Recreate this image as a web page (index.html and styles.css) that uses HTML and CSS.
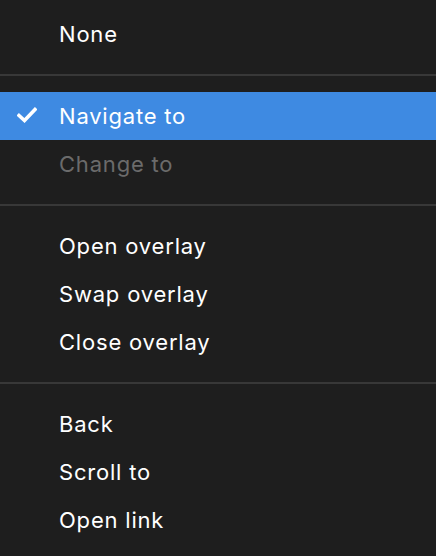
FILE: index.html
```html
<!DOCTYPE html>
<html>
<head>
<meta charset="utf-8">
<link rel="stylesheet" href="styles.css">
</head>
<body>
<div class="menu">
  <div class="item">None</div>
  <div class="sep"></div>
  <div class="item selected">
    <svg class="check" width="20" height="16" viewBox="0 0 20 16"><path d="M2 8.5 L7.5 13.5 L18 2.5" fill="none" stroke="#ffffff" stroke-width="3.6" stroke-linecap="square" stroke-linejoin="miter"/></svg>
    Navigate to
  </div>
  <div class="item disabled">Change to</div>
  <div class="sep"></div>
  <div class="item">Open overlay</div>
  <div class="item">Swap overlay</div>
  <div class="item">Close overlay</div>
  <div class="sep"></div>
  <div class="item">Back</div>
  <div class="item">Scroll to</div>
  <div class="item">Open link</div>
</div>
</body>
</html>
```
FILE: styles.css
```css
html, body {
  margin: 0;
  padding: 0;
  background: #1e1e1e;
}
.menu {
  padding-top: 10px;
  font-family: Inter, "Noto Sans", sans-serif;
  font-size: 22px;
  font-weight: 400;
  letter-spacing: 0.8px;
  color: #ffffff;
  display: flex;
  flex-direction: column;
}
.item {
  position: relative;
  height: 48px;
  display: flex;
  align-items: center;
  padding-left: 59px;
  white-space: nowrap;
}
.selected {
  background: #3e8ae2;
}
.disabled {
  color: #6b6b6b;
}
.check {
  position: absolute;
  left: 17px;
  top: 15px;
}
.sep {
  height: 2px;
  background: #383838;
  margin: 16px 0;
}
```
